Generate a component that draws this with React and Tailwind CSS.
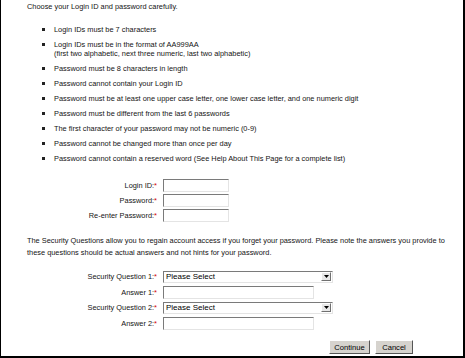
import React from "react";

const Req = () => <span className="text-[#d00000]">*</span>;

function Field({ label, children, h = "h-[15px]" }) {
  return (
    <div className={"flex items-center " + h}>
      <div className="w-[131px] text-right pr-[1px]">
        {label}:<Req />
      </div>
      <div className="ml-[5px]">{children}</div>
    </div>
  );
}

function TextInput({ w }) {
  return (
    <div
      className="h-[13px] bg-white border border-t-[#7a7a7a] border-l-[#7a7a7a] border-r-[#e4e4e4] border-b-[#e4e4e4]"
      style={{ width: w }}
    />
  );
}

function Select() {
  return (
    <div className="w-[170px] h-[12px] bg-white border border-t-[#7a7a7a] border-l-[#7a7a7a] border-r-[#e4e4e4] border-b-[#e4e4e4] flex items-center">
      <span className="flex-1 pl-[2px] text-[8px] text-black leading-none">Please Select</span>
      <div className="w-[10px] h-[9px] mr-[1px] bg-[#e8e8e8] border border-t-white border-l-white border-r-[#707070] border-b-[#707070] flex items-center justify-center">
        <svg width="5" height="3" viewBox="0 0 5 3"><path d="M0 0H5L2.5 3Z" fill="#000" /></svg>
      </div>
    </div>
  );
}

function Button({ children, w }) {
  return (
    <div
      className="h-[14px] bg-[#d6d3ce] border border-t-white border-l-white border-r-[#555] border-b-[#555] flex items-center justify-center text-[7.6px] text-black"
      style={{ width: w }}
    >
      {children}
    </div>
  );
}

const bullets = [
  ["Login IDs must be 7 characters"],
  ["Login IDs must be in the format of AA999AA", "(first two alphabetic, next three numeric, last two alphabetic)"],
  ["Password must be 8 characters in length"],
  ["Password cannot contain your Login ID"],
  ["Password must be at least one upper case letter, one lower case letter, and one numeric digit"],
  ["Password must be different from the last 6 passwords"],
  ["The first character of your password may not be numeric (0-9)"],
  ["Password cannot be changed more than once per day"],
  ["Password cannot contain a reserved word (See Help About This Page for a complete list)"],
];

export default function App() {
  return (
    <div
      className="w-[465px] h-[358px] bg-white border-l border-r-2 border-b-2 border-black text-[7.4px] leading-[9px] text-[#141414] overflow-hidden"
      style={{ fontFamily: '"Liberation Sans", Arial, sans-serif' }}
    >
      <div className="pl-[26px] pt-[2px]">
        <div>Choose your Login ID and password carefully.</div>
        <ul className="mt-[14px] flex flex-col gap-[6px]">
          {bullets.map((b, i) => (
            <li key={i} className="flex">
              <span className="ml-[15px] mt-[3px] w-[3px] h-[3px] bg-[#222] block shrink-0" />
              <span className="ml-[9px]">
                {b.map((l, j) => (
                  <div key={j}>{l}</div>
                ))}
              </span>
            </li>
          ))}
        </ul>

        <div className="mt-[15px] flex flex-col">
          <Field label="Login ID"><TextInput w={66} /></Field>
          <Field label="Password"><TextInput w={66} /></Field>
          <Field label="Re-enter Password"><TextInput w={66} /></Field>
        </div>

        <p className="mt-[12px] pr-[12px] leading-[12px]">
          The Security Questions allow you to regain account access if you forget your password. Please note the answers you provide to these questions should be actual answers and not hints for your password.
        </p>

        <div className="mt-[10px] flex flex-col">
          <Field label="Security Question 1" h="h-[15.5px]"><Select /></Field>
          <Field label="Answer 1" h="h-[15.5px]"><TextInput w={151} /></Field>
          <Field label="Security Question 2" h="h-[15.5px]"><Select /></Field>
          <Field label="Answer 2" h="h-[15.5px]"><TextInput w={151} /></Field>
        </div>

        <div className="mt-[9px] flex justify-end gap-[5px] pr-[50px]">
          <Button w={41}>Continue</Button>
          <Button w={38}>Cancel</Button>
        </div>
      </div>
    </div>
  );
}
